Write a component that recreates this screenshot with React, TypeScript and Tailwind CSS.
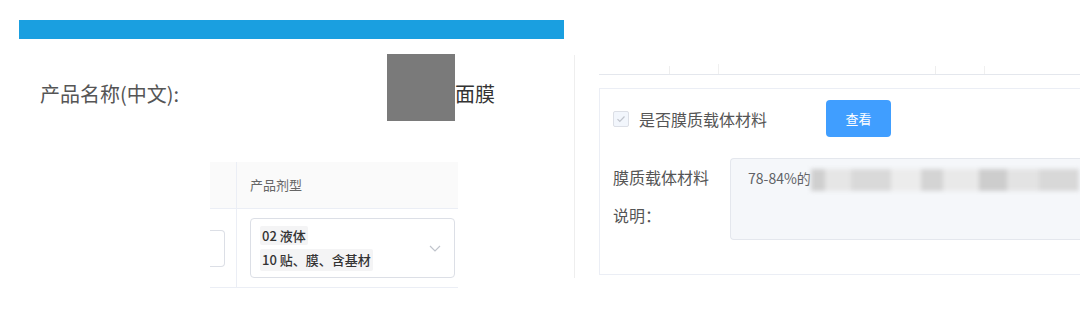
import React from 'react'

const blurBlocks = [
  { w: 14, c: '#cfcfcf' },
  { w: 26, c: '#e6e6e6' },
  { w: 40, c: '#d9d9d9' },
  { w: 30, c: '#ececec' },
  { w: 22, c: '#d4d4d4' },
  { w: 36, c: '#e9e9e9' },
  { w: 28, c: '#cdcdcd' },
  { w: 32, c: '#e3e3e3' },
  { w: 40, c: '#d8d8d8' },
]

export default function App() {
  return (
    <div className="w-[1080px] h-[320px] bg-white flex overflow-hidden" style={{ fontFamily: '"Noto Sans CJK SC", "Noto Sans", sans-serif' }}>
      {/* left */}
      <div className="w-[574px] shrink-0 pt-[20px]">
        <div className="ml-[19px] w-[545px] h-[19px] bg-[#1a9fe0]" />
        <div className="mt-[15px] h-[67px] flex items-center">
          <div className="ml-[40px] w-[347px] mt-[12px] text-[20px] text-[#555] whitespace-nowrap">产品名称(中文):</div>
          <div className="w-[68px] h-[67px] bg-[#7a7a7a]" />
          <div className="mt-[12px] text-[20px] text-[#333]">面膜</div>
        </div>
        <div className="mt-[41px] ml-[210px] w-[248px] text-[13px]">
          <div className="flex h-[47px] bg-[#fafafa] border-b border-[#ebeef5]">
            <div className="w-[27px] border-r border-[#ebeef5]" />
            <div className="flex-1 flex items-center pl-[13px] text-[#666]">产品剂型</div>
          </div>
          <div className="flex h-[79px] border-b border-[#ebeef5]">
            <div className="w-[27px] border-r border-[#ebeef5] pt-[21px]">
              <div className="w-[15px] h-[37px] border border-l-0 border-[#dcdfe6] rounded-r-[4px]" />
            </div>
            <div className="flex-1 pl-[13px] pt-[9px]">
              <div className="w-[205px] h-[60px] border border-[#dcdfe6] rounded-[4px] flex items-center pl-[9px] pr-[12px]">
                <div className="flex-1 flex flex-col items-start gap-[4px] font-medium text-[#333]">
                  <span className="bg-[#f4f4f5] px-[2px] h-[19px] leading-[19px] rounded-[2px]">02 液体</span>
                  <span className="bg-[#f4f4f5] px-[2px] h-[22px] leading-[22px] rounded-[2px]">10 贴、膜、含基材</span>
                </div>
                <svg width="14" height="14" viewBox="0 0 14 14" fill="none" stroke="#c0c4cc" strokeWidth="1.2">
                  <path d="M2 5l5 5 5-5" />
                </svg>
              </div>
            </div>
          </div>
        </div>
      </div>

      {/* right */}
      <div className="flex-1 mt-[55px] h-[223px] border-l border-[#eeeeee] pl-[24px]">
        <div className="h-[20px] border-b border-[#e4e7ed] flex items-end gap-[48px] pl-[70px]">
          <div className="w-px h-[8px] bg-[#eeeeee]" />
          <div className="w-px h-[10px] bg-[#f0f0f0]" />
          <div className="w-[120px] h-px" />
          <div className="w-px h-[8px] bg-[#eeeeee]" />
          <div className="w-px h-[8px] bg-[#f0f0f0]" />
        </div>
        <div className="mt-[13px] h-[187px] border border-r-0 border-[#ebeef5] pl-[13px] pt-[11px]">
          <div className="flex items-center h-[37px]">
            <div className="w-[16px] h-[16px] border border-[#dcdfe6] bg-[#f2f6fc] rounded-[2px] flex items-center justify-center">
              <svg width="10" height="10" viewBox="0 0 10 10" fill="none" stroke="#c0c4cc" strokeWidth="1.2">
                <path d="M1.5 5.2l2.3 2.3 4.7-5" />
              </svg>
            </div>
            <div className="ml-[10px] w-[132px] text-[16px] text-[#555] whitespace-nowrap">是否膜质载体材料</div>
            <button className="ml-[55px] w-[65px] h-[37px] rounded-[4px] bg-[#409eff] text-white text-[13px]">查看</button>
          </div>
          <div className="flex mt-[21px]">
            <div className="w-[117px] text-[16px] text-[#555] leading-[38px]">
              <div>膜质载体材料</div>
              <div>说明：</div>
            </div>
            <div className="flex-1 h-[82px] bg-[#f5f7fa] border border-r-0 border-[#e4e7ed] rounded-l-[4px] pl-[17px] pt-[9px] flex items-start">
              <span className="text-[14px] text-[#606266] whitespace-nowrap">78-84%的</span>
              <div className="flex h-[22px] mt-[1px] blur-[2px]">
                {blurBlocks.map((b, i) => (
                  <div key={i} className="h-full" style={{ width: b.w, background: b.c }} />
                ))}
              </div>
            </div>
          </div>
        </div>
      </div>
    </div>
  )
}
